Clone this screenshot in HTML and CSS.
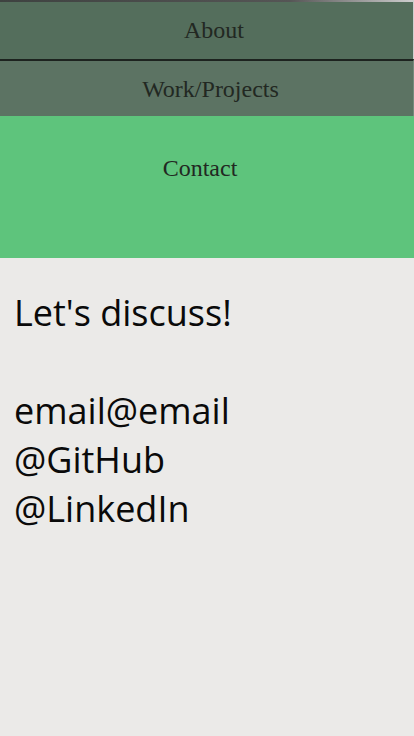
FILE: index.html
```html
<!DOCTYPE html>
<html lang="en">
<head>
<meta charset="utf-8">
<title>Contact</title>
<link rel="stylesheet" href="styles.css">
</head>
<body>
<nav class="nav">
  <a class="nav-item nav-about" href="#">About</a>
  <a class="nav-item nav-work" href="#">Work/Projects</a>
  <a class="nav-item nav-contact" href="#">Contact</a>
</nav>
<main class="content">
  <p class="contact-text">Let's discuss!<br><br>email@email<br>@GitHub<br>@LinkedIn</p>
</main>
</body>
</html>
```
FILE: styles.css
```css
html, body {
  margin: 0;
  padding: 0;
}
body {
  background: #ebeae8;
  min-height: 736px;
}
.nav {
  display: flex;
  flex-direction: column;
}
.nav-item {
  display: flex;
  justify-content: center;
  font-family: "Liberation Serif", "Times New Roman", serif;
  font-size: 24px;
  color: #222822;
  text-decoration: none;
  box-sizing: border-box;
}
.nav-about {
  height: 59px;
  align-items: center;
  background: #546e5c;
  border-top: 2px solid;
  border-image: linear-gradient(to right, #3e4240, #555 70%, #cfcfcf) 1;
  border-right: 1px solid #6f8676;
  padding-left: 15px;
  padding-bottom: 1px;
}
.nav-work {
  height: 57px;
  align-items: center;
  background: #5c7363;
  border-top: 2px solid #1d231f;
  border-right: 1px solid #768b7d;
  padding-left: 8px;
  padding-top: 2px;
}
.nav-contact {
  height: 142px;
  background: #5ec47c;
  padding-top: 39px;
  padding-right: 14px;
}
.content {
  padding: 30px 14px 0;
}
.contact-text {
  margin: 0;
  font-family: "Open Sans", sans-serif;
  font-size: 36px;
  line-height: 49px;
  color: #0a0a0a;
}
```
